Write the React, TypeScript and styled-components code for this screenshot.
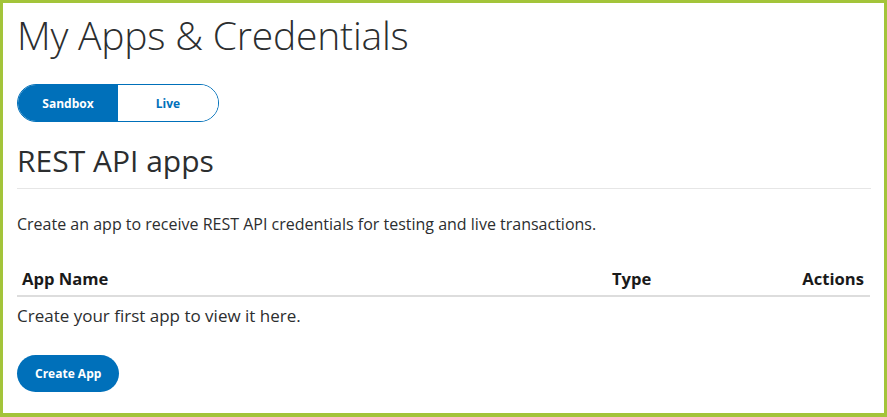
import React from 'react'
import styled, { createGlobalStyle } from 'styled-components'

const GlobalStyle = createGlobalStyle`
  html, body {
    margin: 0;
    padding: 0;
    background: #ffffff;
  }
  body {
    font-family: "Open Sans", "Liberation Sans", sans-serif;
    color: #2c2e2f;
  }
  * { box-sizing: border-box; }
`

const Frame = styled.div`
  width: 887px;
  height: 417px;
  border: 3px solid #a3c43a;
  border-bottom-width: 4px;
  padding: 0 13px 0 14px;
  background: #ffffff;
  overflow: hidden;
`

const Title = styled.h1`
  margin: 8px 0 0;
  font-weight: 300;
  font-size: 39px;
  line-height: 48px;
  letter-spacing: -0.2px;
  color: #2c2e2f;
`

const Toggle = styled.div`
  display: flex;
  width: 202px;
  height: 38px;
  margin-top: 25px;
  border: 1px solid #0070ba;
  border-radius: 19px;
  overflow: hidden;
`

const ToggleOption = styled.button<{ active?: boolean }>`
  flex: 1;
  border: 0;
  padding: 0;
  font-family: "Open Sans", "Liberation Sans", sans-serif;
  font-size: 12px;
  font-weight: 700;
  background: ${p => (p.active ? '#0070ba' : '#ffffff')};
  color: ${p => (p.active ? '#ffffff' : '#0070ba')};
  cursor: pointer;
`

const SectionTitle = styled.h2`
  margin: 20px 0 0;
  font-weight: 400;
  font-size: 30px;
  line-height: 38px;
  padding-bottom: 8px;
  border-bottom: 1px solid #e6e6e6;
  color: #2c2e2f;
`

const Intro = styled.p`
  margin: 24px 0 0;
  font-size: 16px;
  line-height: 22px;
`

const Table = styled.div`
  margin-top: 33px;
  width: 853px;
`

const HeadRow = styled.div`
  display: grid;
  grid-template-columns: 1fr 172px 80px;
  padding: 0 6px 5px 5px;
  border-bottom: 2px solid #dddddd;
`

const HeadCell = styled.div<{ align?: 'left' | 'right' }>`
  font-size: 16.6px;
  font-weight: 700;
  line-height: 22px;
  color: #1a1a1a;
  text-align: ${p => p.align || 'left'};
`

const EmptyRow = styled.div`
  font-size: 17px;
  line-height: 22px;
  padding-top: 8px;
`

const PrimaryButton = styled.button`
  margin-top: 28px;
  height: 37px;
  padding: 0 18px;
  border: 0;
  border-radius: 19px;
  background: #0070ba;
  color: #ffffff;
  font-family: "Open Sans", "Liberation Sans", sans-serif;
  font-size: 12px;
  font-weight: 700;
  cursor: pointer;
`

export default function App() {
  return (
    <>
      <GlobalStyle />
      <Frame>
        <Title>My Apps &amp; Credentials</Title>
        <Toggle>
          <ToggleOption active>Sandbox</ToggleOption>
          <ToggleOption>Live</ToggleOption>
        </Toggle>
        <SectionTitle>REST API apps</SectionTitle>
        <Intro>Create an app to receive REST API credentials for testing and live transactions.</Intro>
        <Table>
          <HeadRow>
            <HeadCell>App Name</HeadCell>
            <HeadCell>Type</HeadCell>
            <HeadCell align="right">Actions</HeadCell>
          </HeadRow>
          <EmptyRow>Create your first app to view it here.</EmptyRow>
        </Table>
        <PrimaryButton>Create App</PrimaryButton>
      </Frame>
    </>
  )
}
